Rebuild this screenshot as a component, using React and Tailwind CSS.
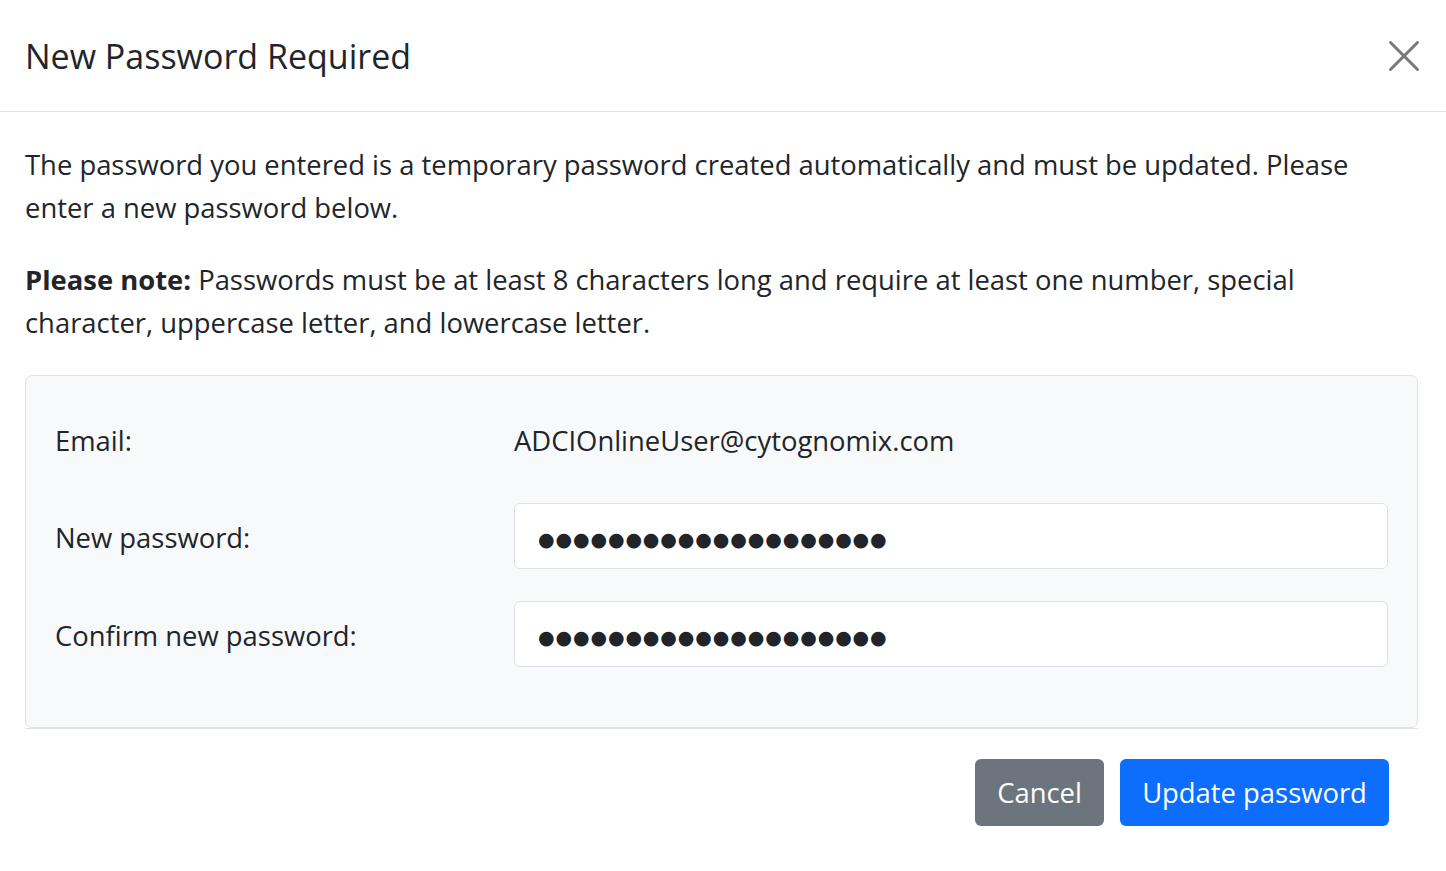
import { X } from "lucide-react";

const font = { fontFamily: '"Open Sans", "Noto Sans", sans-serif' };
const dots = "\u25CF".repeat(20);

function PasswordRow({ label, className }) {
  return (
    <div className={`grid grid-cols-[459px_1fr] items-center ${className}`}>
      <label className="pt-[4px] text-[27.4px] leading-[40px]">{label}</label>
      <input
        type="text"
        readOnly
        value={dots}
        className="h-[66px] w-full rounded-[6px] border border-[#dee2e6] bg-white px-[23px] pt-[6px] text-[19px] tracking-[0.9px] text-[#212529] outline-none"
        style={{ fontFamily: '"DejaVu Sans", sans-serif' }}
      />
    </div>
  );
}

export default function App() {
  return (
    <div className="min-h-screen w-full bg-white text-[#212529]" style={font}>
      {/* header */}
      <div className="flex h-[112px] items-center justify-between border-b border-[#dee2e6] pl-[25px] pr-[15px]">
        <h5 className="text-[34px] leading-[54px] font-normal">New Password Required</h5>
        <button className="flex h-[54px] w-[54px] items-center justify-center text-[#7a7a7a]">
          <X size={54} strokeWidth={1.35} />
        </button>
      </div>

      {/* body */}
      <div className="px-[25px] pt-[31px] pr-[28px]">
        <p className="mb-[29px] text-[27.4px] leading-[43px]">
          The password you entered is a temporary password created automatically and must be updated. Please enter a new password below.
        </p>
        <p className="mb-[31px] text-[27.4px] leading-[43px]">
          <strong className="font-bold">Please note:</strong> Passwords must be at least 8 characters long and require at least one number, special character, uppercase letter, and lowercase letter.
        </p>

        <div className="rounded-[7px] border border-[#dee2e6] bg-[#f8f9fa] px-[29px] pt-[31px] pb-[60px]">
          <div className="mb-[30px] grid h-[66px] grid-cols-[459px_1fr] items-center pt-[1px]">
            <span className="text-[27.4px] leading-[40px]">Email:</span>
            <span className="text-[27.4px] leading-[40px]">ADCIOnlineUser@cytognomix.com</span>
          </div>
          <PasswordRow label="New password:" className="mb-[32px]" />
          <PasswordRow label="Confirm new password:" />
        </div>

        {/* footer */}
        <div className="flex justify-end gap-[16px] border-t border-[#dee2e6] pt-[30px] pr-[29px]">
          <button className="h-[67px] w-[129px] rounded-[6px] bg-[#6c757d] text-[27.4px] text-white">
            Cancel
          </button>
          <button className="h-[67px] w-[269px] rounded-[6px] bg-[#0d6efd] text-[27.4px] text-white">
            Update password
          </button>
        </div>
      </div>
    </div>
  );
}
